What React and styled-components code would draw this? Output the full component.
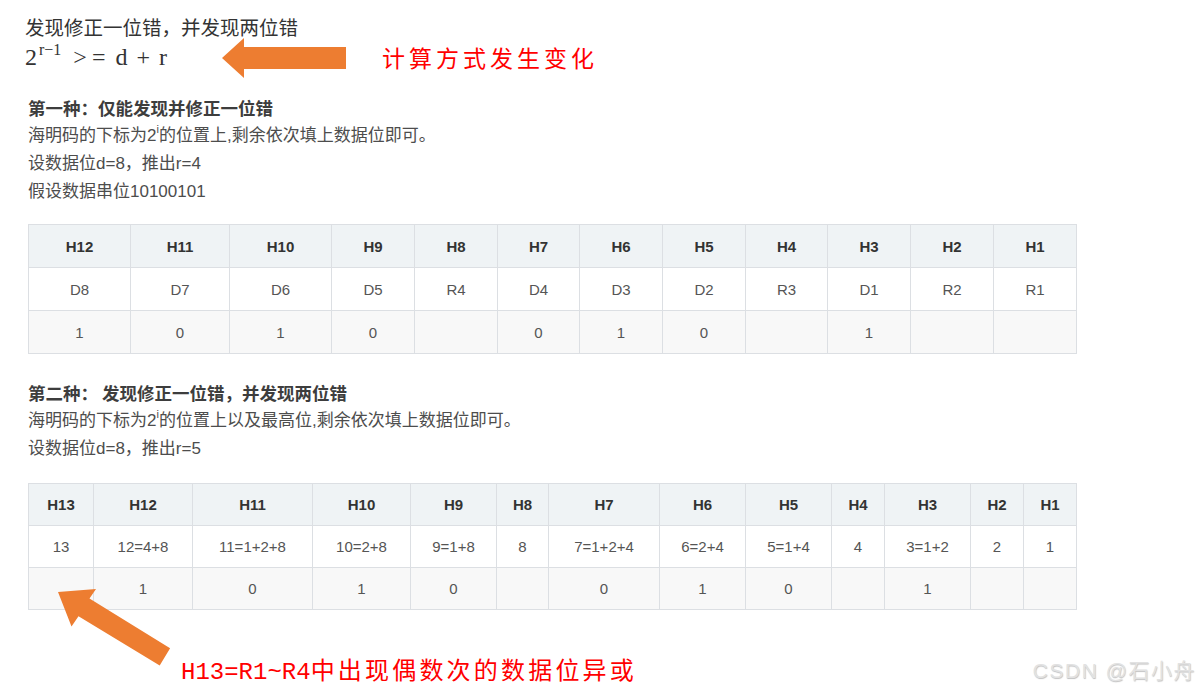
import React from 'react';
import styled, { createGlobalStyle } from 'styled-components';

const GlobalStyle = createGlobalStyle`
  body {
    margin: 0;
    background: #fff;
    font-family: "Liberation Sans", "Noto Sans CJK SC", sans-serif;
  }
`;

const table1 = {
  widths: [102, 99, 102, 83, 83, 82, 83, 83, 82, 83, 83, 83],
  head: ['H12', 'H11', 'H10', 'H9', 'H8', 'H7', 'H6', 'H5', 'H4', 'H3', 'H2', 'H1'],
  rows: [
    ['D8', 'D7', 'D6', 'D5', 'R4', 'D4', 'D3', 'D2', 'R3', 'D1', 'R2', 'R1'],
    ['1', '0', '1', '0', '', '0', '1', '0', '', '1', '', ''],
  ],
};

const table2 = {
  widths: [65, 99, 120, 98, 86, 52, 111, 86, 86, 53, 86, 53, 53],
  head: ['H13', 'H12', 'H11', 'H10', 'H9', 'H8', 'H7', 'H6', 'H5', 'H4', 'H3', 'H2', 'H1'],
  rows: [
    ['13', '12=4+8', '11=1+2+8', '10=2+8', '9=1+8', '8', '7=1+2+4', '6=2+4', '5=1+4', '4', '3=1+2', '2', '1'],
    ['', '1', '0', '1', '0', '', '0', '1', '0', '', '1', '', ''],
  ],
};

const HammingTable = ({ data, $top, $row }) => (
  <Table $top={$top}>
    <colgroup>
      {data.widths.map((w, i) => <Col key={i} $w={w} />)}
    </colgroup>
    <thead>
      <tr>
        {data.head.map((h) => <Th key={h} $row={$row}>{h}</Th>)}
      </tr>
    </thead>
    <tbody>
      {data.rows.map((row, r) => (
        <Tr key={r} $striped={r % 2 === 1}>
          {row.map((c, i) => <Td key={i} $row={$row}>{c}</Td>)}
        </Tr>
      ))}
    </tbody>
  </Table>
);

const LeftArrow = () => (
  <ArrowBox width="124" height="42" viewBox="0 0 124 42">
    <polygon points="0,21 22,1 22,10 124,10 124,32 22,32 22,41" fill="#ed7d31" />
  </ArrowBox>
);

const DiagonalArrow = () => (
  <CornerArrow width="125" height="90" viewBox="0 0 125 90">
    <polygon
      points="8,12 46,9 39.5,18.5 120.1,68.3 109.7,85.5 28.5,36.2 21.5,46.5"
      fill="#ed7d31"
    />
  </CornerArrow>
);

const App = () => (
  <>
    <GlobalStyle />
    <Page>
      <Lead>发现修正一位错，并发现两位错</Lead>
      <FormulaRow>
        <Formula>
          2<sup>r−1</sup>
          <Rel>&gt;<span>=</span></Rel>
          d<Bin>+</Bin>r
        </Formula>
        <LeftArrow />
        <RedNote>计算方式发生变化</RedNote>
      </FormulaRow>

      <Section>
        <Title>第一种：仅能发现并修正一位错</Title>
        <Para>海明码的下标为2<Sup>i</Sup>的位置上,剩余依次填上数据位即可。</Para>
        <Para>设数据位d=8，推出r=4</Para>
        <Para>假设数据串位10100101</Para>
        <HammingTable data={table1} $top={18} $row={42} />
      </Section>

      <Section $gap={25}>
        <Title>第二种： 发现修正一位错，并发现两位错</Title>
        <Para>海明码的下标为2<Sup>i</Sup>的位置上以及最高位,剩余依次填上数据位即可。</Para>
        <Para>设数据位d=8，推出r=5</Para>
        <HammingTable data={table2} $top={20} $row={41} />
      </Section>

      <Footer>
        <RedCaption>
          <Latin>H13=R1~R4</Latin>中出现偶数次的数据位异或
        </RedCaption>
        <Watermark>CSDN @石小舟</Watermark>
      </Footer>

      <DiagonalArrow />
    </Page>
  </>
);

const Page = styled.div`
  position: relative;
  width: 1204px;
  height: 689px;
  overflow: hidden;
  padding: 12px 0 0 25px;
  box-sizing: border-box;
`;

const Lead = styled.div`
  font-family: "Noto Sans CJK SC", sans-serif;
  font-size: 19.5px;
  line-height: 30px;
  color: #333;
`;

const FormulaRow = styled.div`
  display: flex;
  align-items: center;
  height: 30px;
`;

const Formula = styled.div`
  font-family: "Liberation Serif", serif;
  font-size: 24px;
  color: #333;
  width: 197px;
  white-space: nowrap;

  sup {
    font-size: 16px;
    vertical-align: 10px;
    line-height: 0;
    margin-left: 2px;
  }
`;

const Rel = styled.span`
  margin: 0 10px 0 12px;

  span {
    margin-left: 5px;
  }
`;

const Bin = styled.span`
  margin: 0 9px;
`;

const ArrowBox = styled.svg`
  display: block;
  flex: none;
  margin-top: 2px;
`;

const RedNote = styled.div`
  margin-left: 36px;
  font-family: "Noto Sans CJK SC", sans-serif;
  font-size: 23px;
  letter-spacing: 4px;
  color: #ff0000;
  line-height: 30px;
`;

const Section = styled.section`
  margin-top: ${(p) => p.$gap || 22}px;
  padding-left: 3px;
`;

const Title = styled.div`
  font-family: "Noto Sans CJK SC", sans-serif;
  font-weight: 700;
  font-size: 17.5px;
  line-height: 28px;
  color: #3d3d3d;
`;

const Para = styled.div`
  font-family: "Liberation Sans", "Noto Sans CJK SC", sans-serif;
  font-size: 17px;
  line-height: 28px;
  color: #4d4d4d;
`;

const Sup = styled.sup`
  font-size: 11px;
  line-height: 0;
  vertical-align: 8px;
`;

const Table = styled.table`
  margin-top: ${(p) => p.$top}px;
  border-collapse: collapse;
  table-layout: fixed;
  width: 1049px;
  font-family: "Liberation Sans", "Noto Sans CJK SC", sans-serif;
  font-size: 15px;
  text-align: center;
`;

const Col = styled.col`
  width: ${(p) => p.$w}px;
`;

const Th = styled.th`
  height: ${(p) => p.$row}px;
  padding: 0;
  background: #eff3f5;
  border: 1px solid #dcdfe3;
  color: #333;
  font-weight: 700;
`;

const Tr = styled.tr`
  background: ${(p) => (p.$striped ? '#f8f8f8' : '#fff')};
`;

const Td = styled.td`
  height: ${(p) => p.$row}px;
  padding: 0;
  border: 1px solid #dcdfe3;
  color: #555;
`;

const Footer = styled.div`
  display: flex;
  align-items: center;
  justify-content: space-between;
  margin-top: 42px;
  padding-left: 156px;
  padding-right: 8px;
`;

const RedCaption = styled.div`
  font-family: "Noto Sans CJK SC", sans-serif;
  font-size: 24px;
  letter-spacing: 3.2px;
  color: #ff0000;
  line-height: 34px;
`;

const Latin = styled.span`
  font-family: "Liberation Mono", monospace;
  letter-spacing: 0;
  font-size: 24px;
`;

const Watermark = styled.div`
  font-family: "Liberation Sans", "Noto Sans CJK SC", sans-serif;
  font-size: 21px;
  letter-spacing: 1.5px;
  color: #e2e2e2;
  text-shadow: 0.5px 0.5px 1px rgba(0, 0, 0, 0.25);
  margin-top: -4px;
`;

const CornerArrow = styled.svg`
  position: absolute;
  left: 50px;
  top: 580px;
`;

export default App;
